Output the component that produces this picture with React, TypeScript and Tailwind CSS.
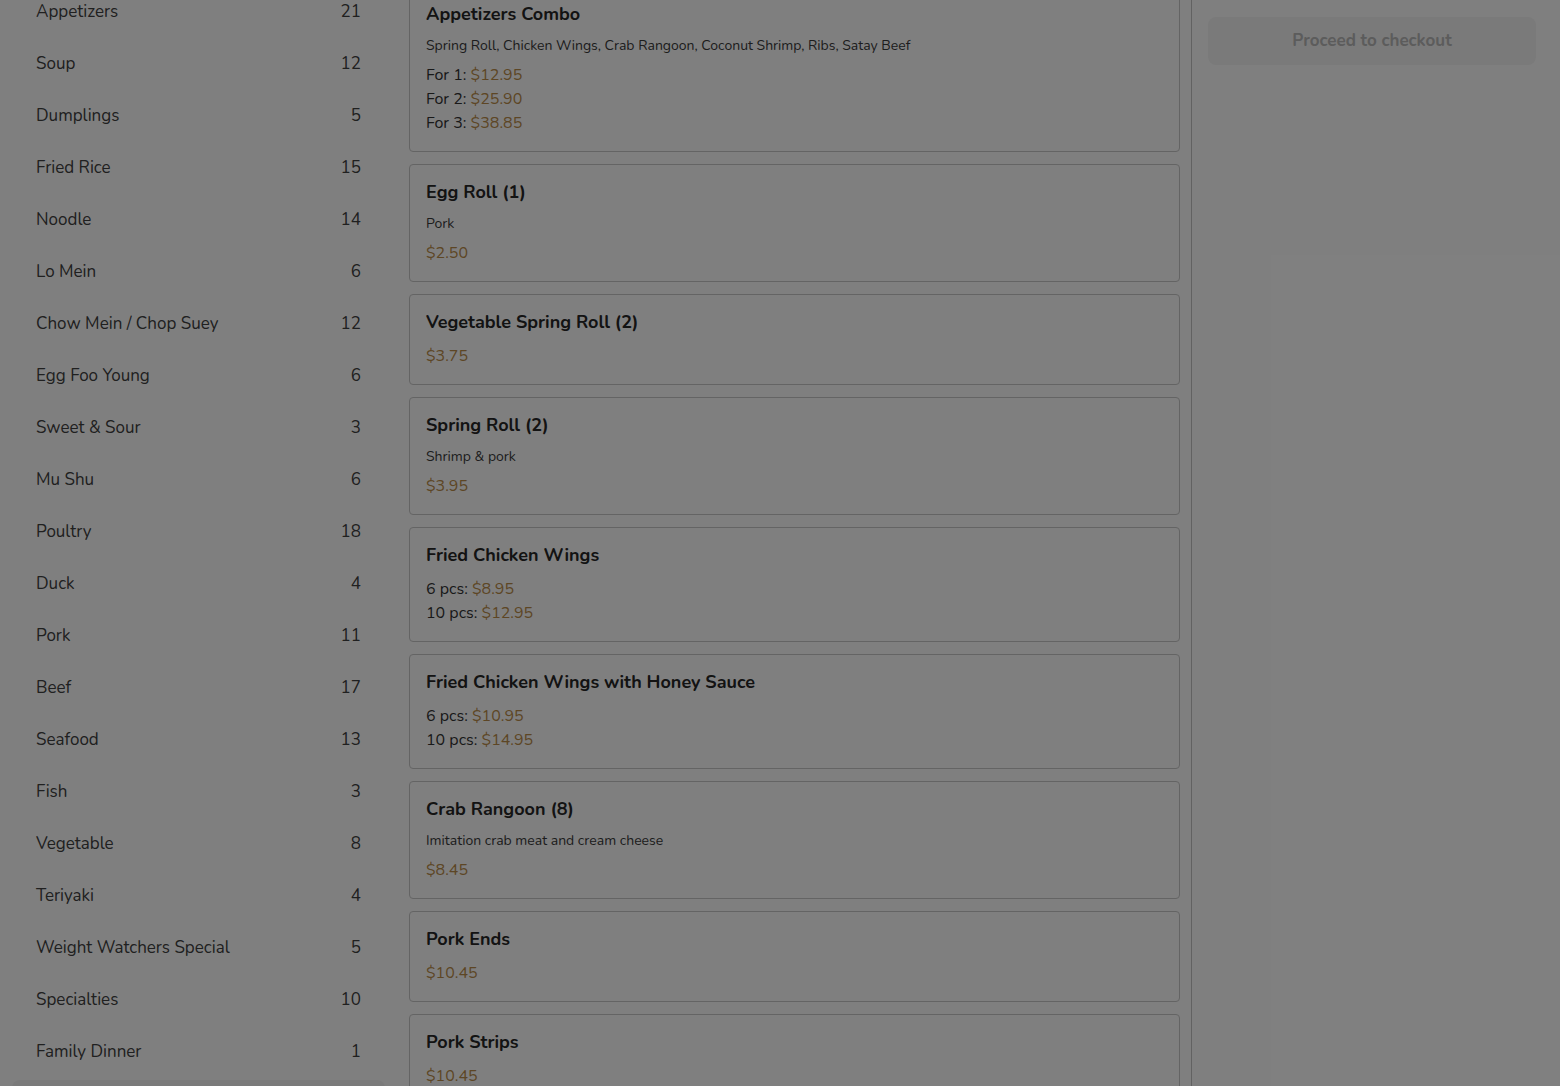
import React from 'react';

type Price = { label?: string; amount: string };
type Item = { name: string; desc?: string; prices: Price[] };

const categories: [string, number][] = [
  ['Appetizers', 21],
  ['Soup', 12],
  ['Dumplings', 5],
  ['Fried Rice', 15],
  ['Noodle', 14],
  ['Lo Mein', 6],
  ['Chow Mein / Chop Suey', 12],
  ['Egg Foo Young', 6],
  ['Sweet & Sour', 3],
  ['Mu Shu', 6],
  ['Poultry', 18],
  ['Duck', 4],
  ['Pork', 11],
  ['Beef', 17],
  ['Seafood', 13],
  ['Fish', 3],
  ['Vegetable', 8],
  ['Teriyaki', 4],
  ['Weight Watchers Special', 5],
  ['Specialties', 10],
  ['Family Dinner', 1],
];

const items: Item[] = [
  {
    name: 'Appetizers Combo',
    desc: 'Spring Roll, Chicken Wings, Crab Rangoon, Coconut Shrimp, Ribs, Satay Beef',
    prices: [
      { label: 'For 1:', amount: '$12.95' },
      { label: 'For 2:', amount: '$25.90' },
      { label: 'For 3:', amount: '$38.85' },
    ],
  },
  { name: 'Egg Roll (1)', desc: 'Pork', prices: [{ amount: '$2.50' }] },
  { name: 'Vegetable Spring Roll (2)', prices: [{ amount: '$3.75' }] },
  { name: 'Spring Roll (2)', desc: 'Shrimp & pork', prices: [{ amount: '$3.95' }] },
  {
    name: 'Fried Chicken Wings',
    prices: [
      { label: '6 pcs:', amount: '$8.95' },
      { label: '10 pcs:', amount: '$12.95' },
    ],
  },
  {
    name: 'Fried Chicken Wings with Honey Sauce',
    prices: [
      { label: '6 pcs:', amount: '$10.95' },
      { label: '10 pcs:', amount: '$14.95' },
    ],
  },
  { name: 'Crab Rangoon (8)', desc: 'Imitation crab meat and cream cheese', prices: [{ amount: '$8.45' }] },
  { name: 'Pork Ends', prices: [{ amount: '$10.45' }] },
  { name: 'Pork Strips', prices: [{ amount: '$10.45' }] },
];

function MenuCard({ item }: { item: Item }) {
  return (
    <div className="rounded-[4px] border border-[#c8c8c8] bg-white px-4 pt-[17px] pb-4">
      <h3 className="text-[18px] leading-5 font-bold text-[#262626]">{item.name}</h3>
      {item.desc && <p className="mt-3 text-[14px] leading-5 text-[#3a3a3a]">{item.desc}</p>}
      <div className={item.desc ? 'mt-[7px]' : 'mt-3'}>
        {item.prices.map((p) => (
          <div key={p.amount + p.label} className="text-[16px] leading-6 text-[#333]">
            {p.label && <span>{p.label} </span>}
            <span className="text-[#bb8d4a]">{p.amount}</span>
          </div>
        ))}
      </div>
    </div>
  );
}

export default function App() {
  return (
    <div
      className="relative h-[1086px] w-[1560px] overflow-hidden bg-white"
      style={{ fontFamily: 'Nunito, Lato, "Noto Sans", sans-serif' }}
    >
      <div className="flex h-full">
        {/* category sidebar */}
        <aside className="w-[397px] shrink-0 px-3">
          <ul className="-mt-[14px]">
            {categories.map(([name, count]) => (
              <li key={name} className="flex h-[52px] items-center justify-between px-6 text-[17px] text-[#404040]">
                <span>{name}</span>
                <span>{count}</span>
              </li>
            ))}
          </ul>
          <div className="mt-[2px] h-10 rounded-lg bg-[#f4f4f4]" />
        </aside>

        {/* menu items */}
        <main className="w-[794px] shrink-0 pl-3 pr-[11px]">
          <div className="-mt-[14px] flex flex-col gap-3">
            {items.map((it) => (
              <MenuCard key={it.name} item={it} />
            ))}
          </div>
        </main>

        {/* cart */}
        <section className="flex-1 border-l border-[#c4c4c4] pl-4 pr-6 pt-[17px]">
          <button
            disabled
            className="h-12 w-full rounded-lg bg-[#f5f5f5] text-[17px] font-bold text-[#b8b8b8]"
          >
            Proceed to checkout
          </button>
        </section>
      </div>

      {/* modal backdrop */}
      <div className="absolute inset-0 bg-black/50" />
    </div>
  );
}
